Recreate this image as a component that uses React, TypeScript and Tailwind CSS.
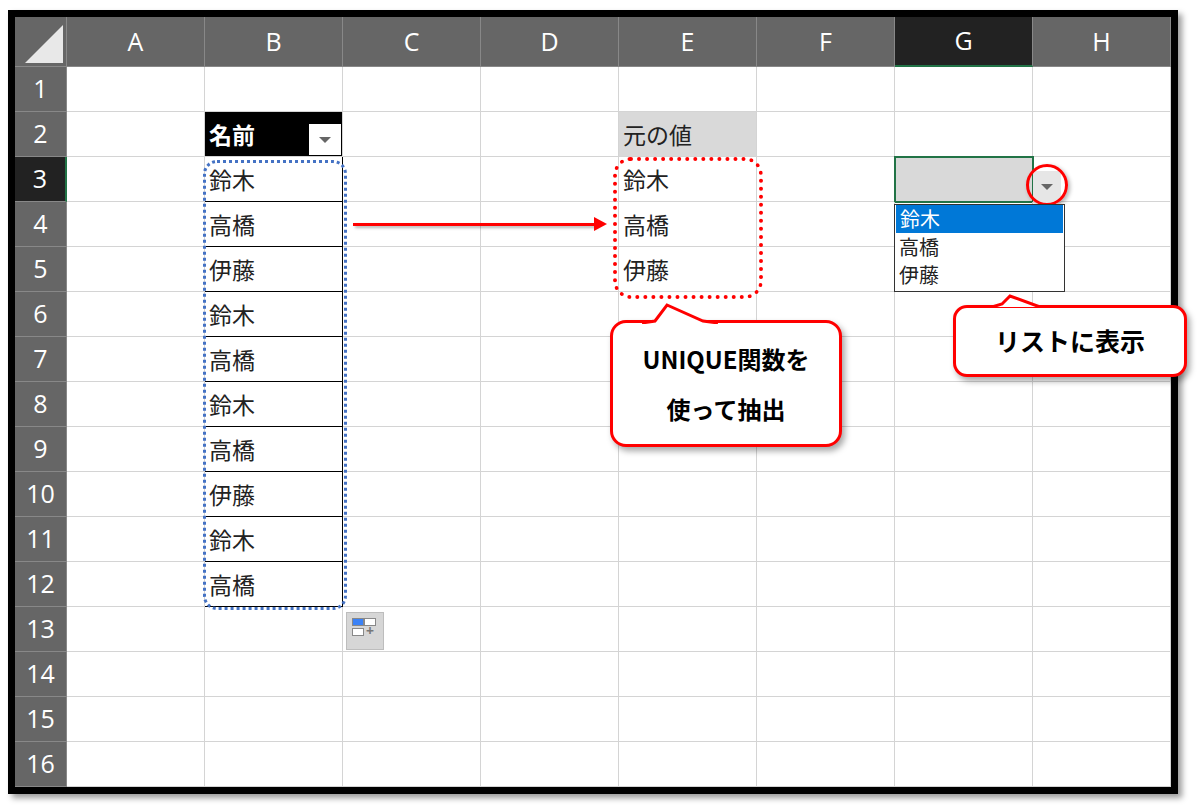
import React from 'react';

const cols = ['A', 'B', 'C', 'D', 'E', 'F', 'G', 'H'];
const rows = Array.from({ length: 16 }, (_, i) => i + 1);
const names = ['鈴木', '高橋', '伊藤', '鈴木', '高橋', '鈴木', '高橋', '伊藤', '鈴木', '高橋'];
const uniq = ['鈴木', '高橋', '伊藤'];

const jp = { fontFamily: '"Noto Sans CJK JP", "Noto Sans", sans-serif' };

function Cell({ r, c }: { r: number; c: number }) {
  const base = 'h-[45px] border-r border-b border-[#d4d4d4] relative text-[23px] text-[#222] flex items-center pl-1';
  if (c === 1 && r === 2)
    return (
      <div className={base + ' bg-black text-white font-bold'} style={jp}>
        名前
        <div className="absolute right-[1px] top-[12px] w-[32px] h-[31px] bg-white flex items-center justify-center">
          <div className="w-0 h-0 border-l-[6px] border-r-[6px] border-t-[6px] border-l-transparent border-r-transparent border-t-[#666]" />
        </div>
      </div>
    );
  if (c === 1 && r >= 3 && r <= 12)
    return (
      <div className={base + ' border-b-black border-r-black'} style={jp}>
        {names[r - 3]}
      </div>
    );
  if (c === 4 && r === 2)
    return (
      <div className={base + ' bg-[#d9d9d9]'} style={jp}>
        元の値
      </div>
    );
  if (c === 4 && r >= 3 && r <= 5)
    return (
      <div className={base} style={jp}>
        {uniq[r - 3]}
      </div>
    );
  if (c === 6 && r === 3) return <div className={base + ' bg-[#d9d9d9] outline-2 outline-[#217346] -outline-offset-1'} />;
  return <div className={base} />;
}

export default function App() {
  return (
    <div className="w-[1200px] h-[808px] bg-white relative overflow-hidden">
      <div className="absolute left-[8px] top-[10px] border-[7px] border-black shadow-[4px_4px_6px_rgba(0,0,0,0.4)]">
        <div className="grid grid-cols-[52px_repeat(8,138px)] bg-white">
          <div className="h-[50px] bg-[#666] border-r border-b border-[#888] relative">
            <div className="absolute right-[3px] bottom-[3px] w-0 h-0 border-l-[38px] border-t-[38px] border-l-transparent border-t-transparent border-b-0 border-r-0 [border-bottom-color:#e8e8e8]" style={{ borderLeftColor: 'transparent', borderBottom: '38px solid #e8e8e8', borderTop: 0, borderLeftWidth: 38 }} />
          </div>
          {cols.map((c) => (
            <div
              key={c}
              className={`h-[50px] flex items-center justify-center text-[25px] text-white border-r border-[#888] ${c === 'G' ? 'bg-[#222] border-b-2 border-b-[#217346]' : 'bg-[#666] border-b'}`}
              style={{ fontFamily: '"Open Sans", sans-serif' }}
            >
              {c}
            </div>
          ))}
          {rows.map((r) => (
            <React.Fragment key={r}>
              <div
                className={`h-[45px] flex items-center justify-center text-[25px] text-white border-b border-[#888] ${r === 3 ? 'bg-[#222] border-r-2 border-r-[#217346]' : 'bg-[#666] border-r'}`}
                style={{ fontFamily: '"Open Sans", sans-serif' }}
              >
                {r}
              </div>
              {cols.map((_, c) => (
                <Cell key={c} r={r} c={c} />
              ))}
            </React.Fragment>
          ))}
        </div>
      </div>

      {/* blue dotted selection */}
      <div className="absolute left-[203px] top-[160px] w-[144px] h-[450px] border-[3px] border-dotted border-[#4472c4] rounded-[14px]" />
      {/* arrow */}
      <div className="absolute left-[353px] top-[223px] w-[244px] h-[3px] bg-[#ff0000] shadow-[2px_2px_3px_rgba(0,0,0,0.3)]" />
      <div className="absolute left-[594px] top-[217px] w-0 h-0 border-t-[7px] border-b-[7px] border-l-[13px] border-t-transparent border-b-transparent border-l-[#ff0000]" />
      {/* red dotted */}
      <div className="absolute left-[613px] top-[157px] w-[150px] h-[142px] border-[4px] border-dotted border-[#ff0000] rounded-[18px]" />

      {/* callout 1 */}
      <div className="absolute left-[610px] top-[320px] w-[232px] h-[127px] bg-white border-[3px] border-[#ff0000] rounded-[16px] shadow-[3px_4px_6px_rgba(0,0,0,0.35)] flex flex-col items-center justify-center font-bold text-[24px] leading-[50px] text-black" style={jp}>
        <span>UNIQUE関数を</span>
        <span>使って抽出</span>
      </div>
      <svg className="absolute left-[640px] top-[302px]" width="80" height="22" viewBox="0 0 80 22">
        <path d="M2 21 L15 19 L27 3 L63 19 L78 21" fill="white" stroke="#ff0000" strokeWidth="3" />
      </svg>

      {/* dropdown button + list */}
      <div className="absolute left-[1033px] top-[171px] w-[28px] h-[32px] bg-[#e6e6e6] flex items-center justify-center">
        <div className="w-0 h-0 border-l-[6px] border-r-[6px] border-t-[6px] border-l-transparent border-r-transparent border-t-[#666]" />
      </div>
      <div className="absolute left-[1026px] top-[164px] w-[42px] h-[42px] rounded-full border-[3px] border-[#ff0000] shadow-[2px_2px_4px_rgba(0,0,0,0.3)]" />
      <div className="absolute left-[894px] top-[204px] w-[171px] h-[88px] bg-white border border-[#333] text-[20px] leading-[28px] text-[#222]" style={jp}>
        <div className="bg-[#0078d7] text-white pl-1 mx-[1px]">鈴木</div>
        <div className="pl-1">高橋</div>
        <div className="pl-1">伊藤</div>
      </div>

      {/* callout 2 */}
      <div className="absolute left-[953px] top-[305px] w-[234px] h-[72px] bg-white border-[3px] border-[#ff0000] rounded-[14px] shadow-[3px_4px_6px_rgba(0,0,0,0.35)] flex items-center justify-center font-bold text-[25px] text-black" style={jp}>
        リストに表示
      </div>
      <svg className="absolute left-[990px] top-[292px]" width="80" height="16" viewBox="0 0 80 16">
        <path d="M2 15 L12 12 L20 4 L50 15 L78 15" fill="white" stroke="#ff0000" strokeWidth="3" />
      </svg>

      {/* paste options icon */}
      <div className="absolute left-[346px] top-[612px] w-[38px] h-[38px] bg-[#d6d6d6] border border-[#bdbdbd] p-[5px]">
        <div className="flex">
          <div className="w-[12px] h-[8px] bg-[#3b82f6] border border-[#888]" />
          <div className="w-[12px] h-[8px] bg-white border border-[#888]" />
        </div>
        <div className="flex items-end">
          <div className="w-[12px] h-[8px] bg-white border border-[#888]" />
          <span className="text-[#777] text-[14px] font-bold leading-[10px] ml-[2px]">+</span>
        </div>
      </div>
    </div>
  );
}
